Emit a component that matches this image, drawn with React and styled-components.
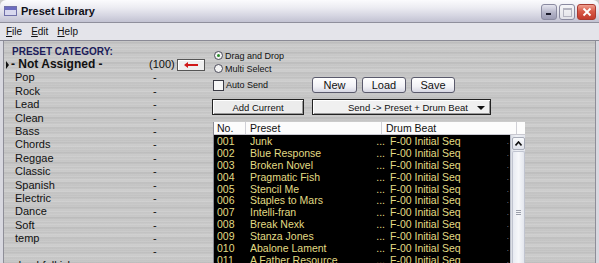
import React from 'react';
import styled, { createGlobalStyle } from 'styled-components';

const categories = [
  'Pop', 'Rock', 'Lead', 'Clean', 'Bass', 'Chords', 'Reggae',
  'Classic', 'Spanish', 'Electric', 'Dance', 'Soft', 'temp', '',
];

const presets = [
  'Junk', 'Blue Response', 'Broken Novel', 'Pragmatic Fish', 'Stencil Me',
  'Staples to Mars', 'Intelli-fran', 'Break Nexk', 'Stanza Jones',
  'Abalone Lament', 'A Father Resource',
];

const GlobalStyle = createGlobalStyle`
  html, body {
    margin: 0;
    padding: 0;
    background: #c9c9c9;
    overflow: hidden;
  }
  body {
    font-family: "Liberation Sans", Arial, sans-serif;
  }
`;

const Window = styled.div`
  width: 599px;
  height: 263px;
  display: flex;
  flex-direction: column;
  overflow: hidden;
  background: #c9c9c9;
`;

const TitleBar = styled.div`
  height: 22px;
  display: flex;
  align-items: center;
  padding: 0 3px 0 4px;
  border-bottom: 1px solid #8f8f9c;
  background: linear-gradient(180deg, #fbfbfd 0%, #ececf2 35%, #d6d6e2 70%, #c2c2d2 100%);
  border-radius: 6px 6px 0 0;
`;

const Title = styled.span`
  margin-left: 4px;
  font-size: 11px;
  font-weight: bold;
  color: #101018;
  flex: 1;
`;

const Controls = styled.div`
  display: flex;
  gap: 2px;
  align-items: center;
  margin-top: 2px;
`;

const CtrlButton = styled.div`
  width: ${({ $wide }) => ($wide ? 19 : 16)}px;
  height: 16px;
  border-radius: 3px;
  box-sizing: border-box;
  display: flex;
  align-items: center;
  justify-content: center;
  border: 1px solid ${({ $kind }) => ($kind === 'close' ? '#a83a30' : '#8a8aa0')};
  background: ${({ $kind }) =>
    $kind === 'close'
      ? 'linear-gradient(180deg, #f0a090 0%, #d85a48 45%, #c23a2c 100%)'
      : $kind === 'min'
      ? 'linear-gradient(180deg, #e6e6f0 0%, #b4b4c8 55%, #9c9cb4 100%)'
      : 'linear-gradient(180deg, #f6f6f8 0%, #e2e2e8 100%)'};
`;

const MenuBar = styled.div`
  height: 17px;
  display: flex;
  align-items: center;
  gap: 9px;
  padding-left: 6px;
  background: #e4e4ea;
  border-bottom: 1px solid #8a8a96;
  font-size: 10px;
  color: #111;
`;

const MenuItem = styled.span`
  & u {
    text-decoration: underline;
  }
`;

const Body = styled.div`
  flex: 1;
  display: flex;
  border-left: 3px solid #d8d8e0;
  border-right: 3px solid #d8d8e0;
  box-shadow: inset 1px 0 #8e8e98, inset -1px 0 #8e8e98;
  background-color: #c8c8c8;
  background-image:
    repeating-linear-gradient(180deg, rgba(255,255,255,0.18) 0px, rgba(255,255,255,0) 1px, rgba(0,0,0,0.05) 2px, rgba(255,255,255,0.1) 3px, rgba(0,0,0,0) 5px),
    repeating-linear-gradient(180deg, rgba(0,0,0,0.04) 0px, rgba(255,255,255,0.08) 7px, rgba(0,0,0,0.03) 11px);
  overflow: hidden;
`;

const LeftPanel = styled.div`
  width: 203px;
  padding: 2px 0 0 3px;
  box-sizing: border-box;
`;

const Heading = styled.div`
  font-size: 10px;
  font-weight: bold;
  color: #1c1c5a;
  height: 14px;
  line-height: 18px;
  padding-left: 6px;
`;

const CategoryRow = styled.div`
  height: 13.4px;
  line-height: 13.4px;
  display: flex;
  align-items: center;
  font-size: ${({ $active }) => ($active ? 12 : 11)}px;
  font-weight: ${({ $active }) => ($active ? 'bold' : 'normal')};
  color: #111;
  margin-top: ${({ $active }) => ($active ? 1 : 0)}px;
`;

const Marker = styled.span`
  width: 0;
  height: 0;
  border-top: 4px solid transparent;
  border-bottom: 4px solid transparent;
  border-left: 3px solid #111;
  margin-right: ${({ $show }) => ($show ? 2 : 6)}px;
  opacity: ${({ $show }) => ($show ? 1 : 0)};
`;

const CatName = styled.span`
  width: 138px;
  white-space: nowrap;
`;

const CatCount = styled.span`
  width: ${({ $active }) => ($active ? 26 : 20)}px;
  font-weight: normal;
  font-size: 11px;
`;

const ArrowButton = styled.div`
  width: 26px;
  height: 10px;
  margin-left: 2px;
  border: 1px solid #555;
  box-shadow: inset 1px 1px #fff;
  background: #efefef;
  display: flex;
  align-items: center;
  justify-content: center;
`;

const RightPanel = styled.div`
  flex: 1;
  padding: 8px 0 0 6px;
  display: flex;
  flex-direction: column;
`;

const OptionsRow = styled.div`
  display: flex;
  align-items: flex-end;
`;

const Options = styled.div`
  width: 100px;
  display: flex;
  flex-direction: column;
`;

const OptionLine = styled.label`
  display: flex;
  align-items: center;
  height: ${({ $tall }) => ($tall ? 16 : 13)}px;
  margin-top: ${({ $tall }) => ($tall ? 2 : 0)}px;
  font-size: 9px;
  color: #111;
  gap: 2px;
`;

const Radio = styled.span`
  width: 9px;
  height: 9px;
  margin-left: 2px;
  border-radius: 50%;
  border: 1px solid #4a4a5a;
  background: #f4f4f4;
  box-sizing: border-box;
  display: flex;
  align-items: center;
  justify-content: center;
  &::after {
    content: '';
    width: 3px;
    height: 3px;
    border-radius: 50%;
    background: ${({ $on }) => ($on ? '#2a8a2a' : 'transparent')};
  }
`;

const Checkbox = styled.span`
  width: 11px;
  height: 11px;
  margin-left: 1px;
  box-sizing: border-box;
  border: 1px solid #3a3a44;
  background: #f6f6f6;
`;

const Buttons = styled.div`
  display: flex;
  gap: 5px;
`;

const Button = styled.div`
  width: ${({ $w }) => $w || 44}px;
  height: 16px;
  box-sizing: border-box;
  border: 1px solid #5a5a6c;
  border-radius: 3px;
  background: linear-gradient(180deg, #ffffff 0%, #f2f2f6 60%, #d8d8e4 100%);
  font-size: 11px;
  color: #111;
  display: flex;
  align-items: center;
  justify-content: center;
`;

const ActionRow = styled.div`
  display: flex;
  gap: 8px;
  margin-top: 6px;
`;

const FlatButton = styled.div`
  width: 92px;
  height: 16px;
  box-sizing: border-box;
  border: 1px solid #222;
  box-shadow: inset 1px 1px #fff, inset -1px -1px #9a9a9a;
  background: #ececec;
  font-size: 9.5px;
  display: flex;
  align-items: center;
  justify-content: center;
  color: #111;
`;

const Dropdown = styled.div`
  width: 179px;
  height: 16px;
  box-sizing: border-box;
  border: 1px solid #222;
  box-shadow: inset 1px 1px #fff, inset -1px -1px #9a9a9a;
  background: #f0f0f0;
  font-size: 9.5px;
  display: flex;
  align-items: center;
  color: #111;
  position: relative;
  padding-left: 35px;
`;

const DropArrow = styled.span`
  position: absolute;
  right: 5px;
  top: 6px;
  width: 0;
  height: 0;
  border-left: 4px solid transparent;
  border-right: 4px solid transparent;
  border-top: 4px solid #111;
`;

const Table = styled.div`
  margin-top: 7px;
  margin-left: 1px;
  width: 311px;
  flex: 1;
  display: flex;
  flex-direction: column;
  border-left: 1px solid #8a8a94;
  overflow: hidden;
`;

const HeaderRow = styled.div`
  display: flex;
  height: 16px;
  background: #fcfcfc;
  border-bottom: 1px solid #c8c8d0;
  font-size: 10.5px;
  color: #111;
`;

const HeaderCell = styled.div`
  width: ${({ $w }) => $w}px;
  padding-left: ${({ $pad }) => $pad}px;
  box-sizing: border-box;
  display: flex;
  align-items: center;
  border-right: ${({ $last }) => ($last ? 'none' : '1px solid #d0d0d6')};
`;

const TableBody = styled.div`
  flex: 1;
  display: flex;
`;

const Rows = styled.div`
  flex: 1;
  background: #000;
  padding-top: 1px;
`;

const Row = styled.div`
  display: flex;
  height: 11.9px;
  line-height: 11.9px;
  font-size: 10.5px;
  color: #e2dc84;
  white-space: nowrap;
`;

const Cell = styled.span`
  width: ${({ $w }) => $w}px;
  padding-left: ${({ $pad }) => $pad || 0}px;
  box-sizing: border-box;
  overflow: hidden;
  display: flex;
  justify-content: space-between;
`;

const Dots = styled.span`
  padding-right: ${({ $pr }) => $pr}px;
  color: ${({ $dim }) => ($dim ? '#9a9a9a' : '#e2dc84')};
  font-size: ${({ $dim }) => ($dim ? 8 : 10.5)}px;
`;

const Scrollbar = styled.div`
  width: 15px;
  background: linear-gradient(90deg, #dcdfe6 0%, #eef0f5 40%, #e2e5ec 100%);
  border-left: 1px solid #b8bcc8;
  display: flex;
  flex-direction: column;
  align-items: center;
  padding-top: 2px;
  box-sizing: border-box;
`;

const ScrollUp = styled.div`
  width: 13px;
  height: 13px;
  box-sizing: border-box;
  border: 1px solid #a8acb8;
  border-radius: 2px;
  background: linear-gradient(180deg, #fafbfd, #dfe2ea);
  display: flex;
  align-items: center;
  justify-content: center;
`;

const Thumb = styled.div`
  width: 13px;
  flex: 1;
  margin-top: 1px;
  box-sizing: border-box;
  border: 1px solid #c0c4d0;
  border-bottom: none;
  border-radius: 2px 2px 0 0;
  background: linear-gradient(90deg, #e8ebf2, #f6f7fa 50%, #e4e7ee);
  display: flex;
  flex-direction: column;
  align-items: center;
  padding-top: 58px;
  gap: 1px;
`;

const Grip = styled.span`
  width: 5px;
  height: 1px;
  background: #9a9eaa;
`;

const App = () => (
  <>
    <GlobalStyle />
    <Window>
      <TitleBar>
        <svg width="13" height="10" viewBox="0 0 13 10">
          <rect x="0.5" y="0.5" width="12" height="9" fill="#d8d8ee" stroke="#7070a8" />
          <rect x="1" y="1" width="11" height="3" fill="#6c6cc0" />
        </svg>
        <Title>Preset Library</Title>
        <Controls>
          <CtrlButton $kind="min">
            <svg width="8" height="8" viewBox="0 0 8 8">
              <rect x="1" y="5" width="5" height="2" fill="#1a1a2a" />
            </svg>
          </CtrlButton>
          <CtrlButton $kind="max">
            <svg width="9" height="9" viewBox="0 0 9 9">
              <rect x="0.5" y="0.5" width="8" height="8" fill="none" stroke="#b4b4c0" />
              <rect x="0.5" y="0.5" width="8" height="1.5" fill="#b4b4c0" />
            </svg>
          </CtrlButton>
          <CtrlButton $kind="close" $wide>
            <svg width="10" height="10" viewBox="0 0 10 10">
              <path d="M1.5 1.5 L8.5 8.5 M8.5 1.5 L1.5 8.5" stroke="#fff" strokeWidth="1.8" />
            </svg>
          </CtrlButton>
        </Controls>
      </TitleBar>
      <MenuBar>
        <MenuItem><u>F</u>ile</MenuItem>
        <MenuItem><u>E</u>dit</MenuItem>
        <MenuItem><u>H</u>elp</MenuItem>
      </MenuBar>
      <Body>
        <LeftPanel>
          <Heading>PRESET CATEGORY:</Heading>
          <CategoryRow $active>
            <Marker $show />
            <CatName>- Not Assigned -</CatName>
            <CatCount $active>(100)</CatCount>
            <ArrowButton>
              <svg width="14" height="6" viewBox="0 0 14 6">
                <path d="M0 3 L4 0 L4 2 L14 2 L14 4 L4 4 L4 6 Z" fill="#d01818" />
              </svg>
            </ArrowButton>
          </CategoryRow>
          {categories.map((name, i) => (
            <CategoryRow key={i}>
              <Marker />
              <CatName>{name}</CatName>
              <CatCount>-</CatCount>
            </CategoryRow>
          ))}
          <CategoryRow>
            <Marker />
            <CatName>dumbfolkish</CatName>
          </CategoryRow>
        </LeftPanel>
        <RightPanel>
          <OptionsRow>
            <Options>
              <OptionLine><Radio $on />Drag and Drop</OptionLine>
              <OptionLine><Radio />Multi Select</OptionLine>
              <OptionLine $tall><Checkbox />Auto Send</OptionLine>
            </Options>
            <Buttons>
              <Button $w={45}>New</Button>
              <Button>Load</Button>
              <Button>Save</Button>
            </Buttons>
          </OptionsRow>
          <ActionRow>
            <FlatButton>Add Current</FlatButton>
            <Dropdown>
              Send -&gt; Preset + Drum Beat
              <DropArrow />
            </Dropdown>
          </ActionRow>
          <Table>
            <HeaderRow>
              <HeaderCell $w={32} $pad={3}>No.</HeaderCell>
              <HeaderCell $w={136} $pad={4}>Preset</HeaderCell>
              <HeaderCell $w={135} $pad={4}>Drum Beat</HeaderCell>
              <HeaderCell $w={8} $last />
            </HeaderRow>
            <TableBody>
              <Rows>
                {presets.map((name, i) => (
                  <Row key={i}>
                    <Cell $w={36} $pad={3}>{String(i + 1).padStart(3, '0')}</Cell>
                    <Cell $w={136}>
                      <span>{name}</span>
                      <Dots $pr={1}>...</Dots>
                    </Cell>
                    <Cell $w={123} $pad={4}>
                      <span>F-00 Initial Seq</span>
                      <Dots $dim $pr={0}>.</Dots>
                    </Cell>
                  </Row>
                ))}
              </Rows>
              <Scrollbar>
                <ScrollUp>
                  <svg width="7" height="5" viewBox="0 0 7 5">
                    <path d="M0.5 4.5 L3.5 1 L6.5 4.5" fill="none" stroke="#111" strokeWidth="1.6" />
                  </svg>
                </ScrollUp>
                <Thumb>
                  <Grip />
                  <Grip />
                  <Grip />
                </Thumb>
              </Scrollbar>
            </TableBody>
          </Table>
        </RightPanel>
      </Body>
    </Window>
  </>
);

export default App;
